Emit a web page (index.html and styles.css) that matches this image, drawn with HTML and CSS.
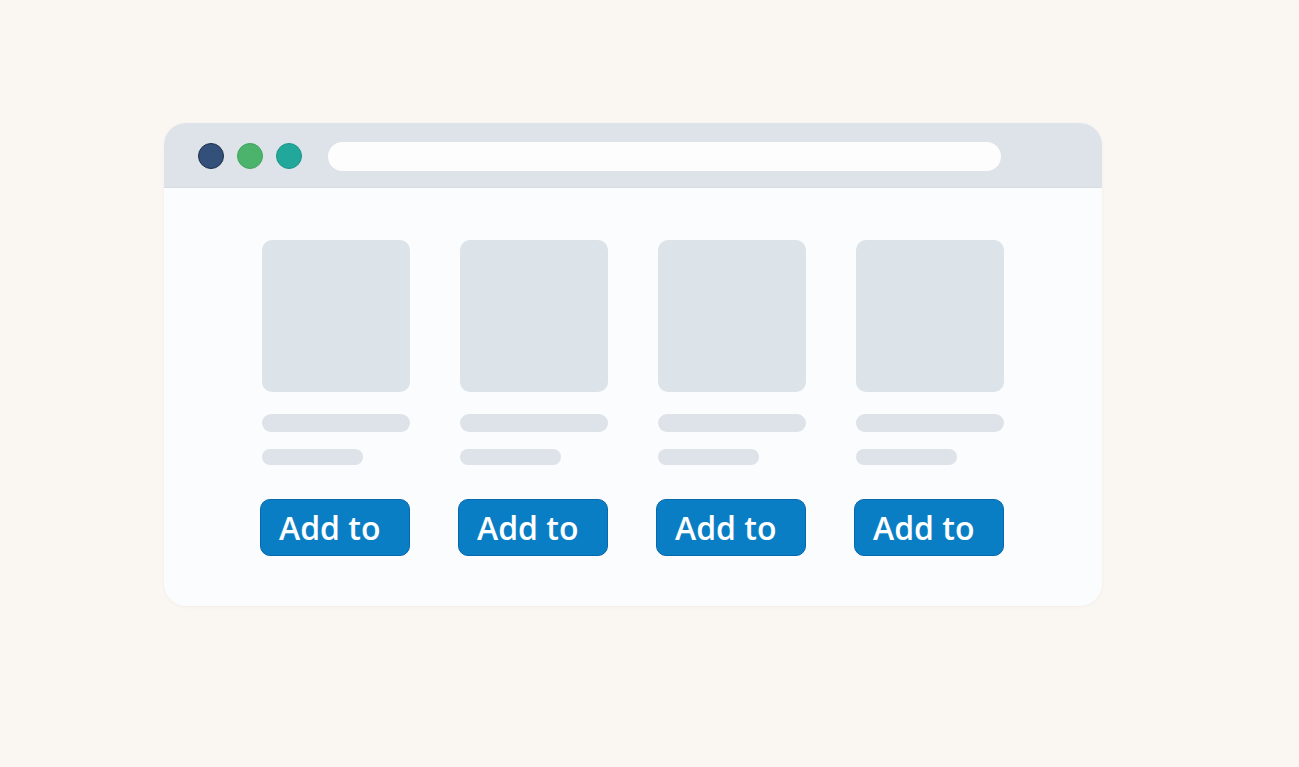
FILE: index.html
```html
<!DOCTYPE html>
<html lang="en">
<head>
    <meta charset="UTF-8">
    <title>Shop Mockup</title>
    <link rel="stylesheet" href="styles.css">
</head>
<body>

    <div class="window">
        <div class="titlebar">
            <div class="dots">
                <span class="dot navy"></span>
                <span class="dot green"></span>
                <span class="dot teal"></span>
            </div>
            <div class="address"></div>
        </div>

        <div class="products">
            <div class="card">
                <div class="thumb"></div>
                <div class="line long"></div>
                <div class="line short"></div>
                <button class="add-btn">Add to</button>
            </div>
            <div class="card">
                <div class="thumb"></div>
                <div class="line long"></div>
                <div class="line short"></div>
                <button class="add-btn">Add to</button>
            </div>
            <div class="card">
                <div class="thumb"></div>
                <div class="line long"></div>
                <div class="line short"></div>
                <button class="add-btn">Add to</button>
            </div>
            <div class="card">
                <div class="thumb"></div>
                <div class="line long"></div>
                <div class="line short"></div>
                <button class="add-btn">Add to</button>
            </div>
        </div>
    </div>

</body>
</html>
```

FILE: styles.css
```css
body {
    margin: 0;
    height: 767px;
    background: #faf6f2;
    font-family: 'Open Sans', sans-serif;
    overflow: hidden;
}
.window {
    margin: 123px 0 0 164px;
    width: 938px;
    height: 483px;
    background: #fbfcfd;
    border-radius: 22px;
    overflow: hidden;
    box-shadow: 0 1px 3px rgba(120, 110, 100, 0.06);
}
.titlebar {
    height: 65px;
    background: #dde3e8;
    display: flex;
    align-items: center;
    padding: 2px 101px 0 34px;
    gap: 26px;
    border-bottom: 1px solid #d6dde3;
    box-sizing: border-box;
}
.dots {
    display: flex;
    gap: 13px;
}
.dot {
    width: 26px;
    height: 26px;
    border-radius: 50%;
    box-sizing: border-box;
}
.dot.navy {
    background: #33507a;
    border: 1px solid #1e2f4c;
}
.dot.green {
    background: #4bb36b;
    border: 1px solid #41a25f;
}
.dot.teal {
    background: #21a89b;
    border: 1px solid #1b9588;
}
.address {
    flex: 1;
    height: 29px;
    background: #fdfdfe;
    border-radius: 15px;
}
.products {
    display: flex;
    gap: 48px;
    padding: 52px 0 0 96px;
}
.card {
    width: 150px;
    display: flex;
    flex-direction: column;
    align-items: flex-start;
}
.thumb {
    width: 148px;
    height: 152px;
    margin-left: 2px;
    background: #dce3e9;
    border-radius: 10px;
}
.line {
    background: #dde3e9;
    border-radius: 9px;
    margin-left: 2px;
}
.line.long {
    width: 148px;
    height: 18px;
    margin-top: 22px;
}
.line.short {
    width: 101px;
    height: 16px;
    margin-top: 17px;
}
.add-btn {
    margin-top: 34px;
    width: 150px;
    height: 57px;
    padding: 0 0 0 18px;
    text-align: left;
    background: #0a7ec5;
    border: 1px solid #0868ad;
    border-radius: 10px;
    color: #fff;
    font-family: 'Open Sans', sans-serif;
    font-size: 32px;
    font-weight: 600;
    cursor: pointer;
}
```
